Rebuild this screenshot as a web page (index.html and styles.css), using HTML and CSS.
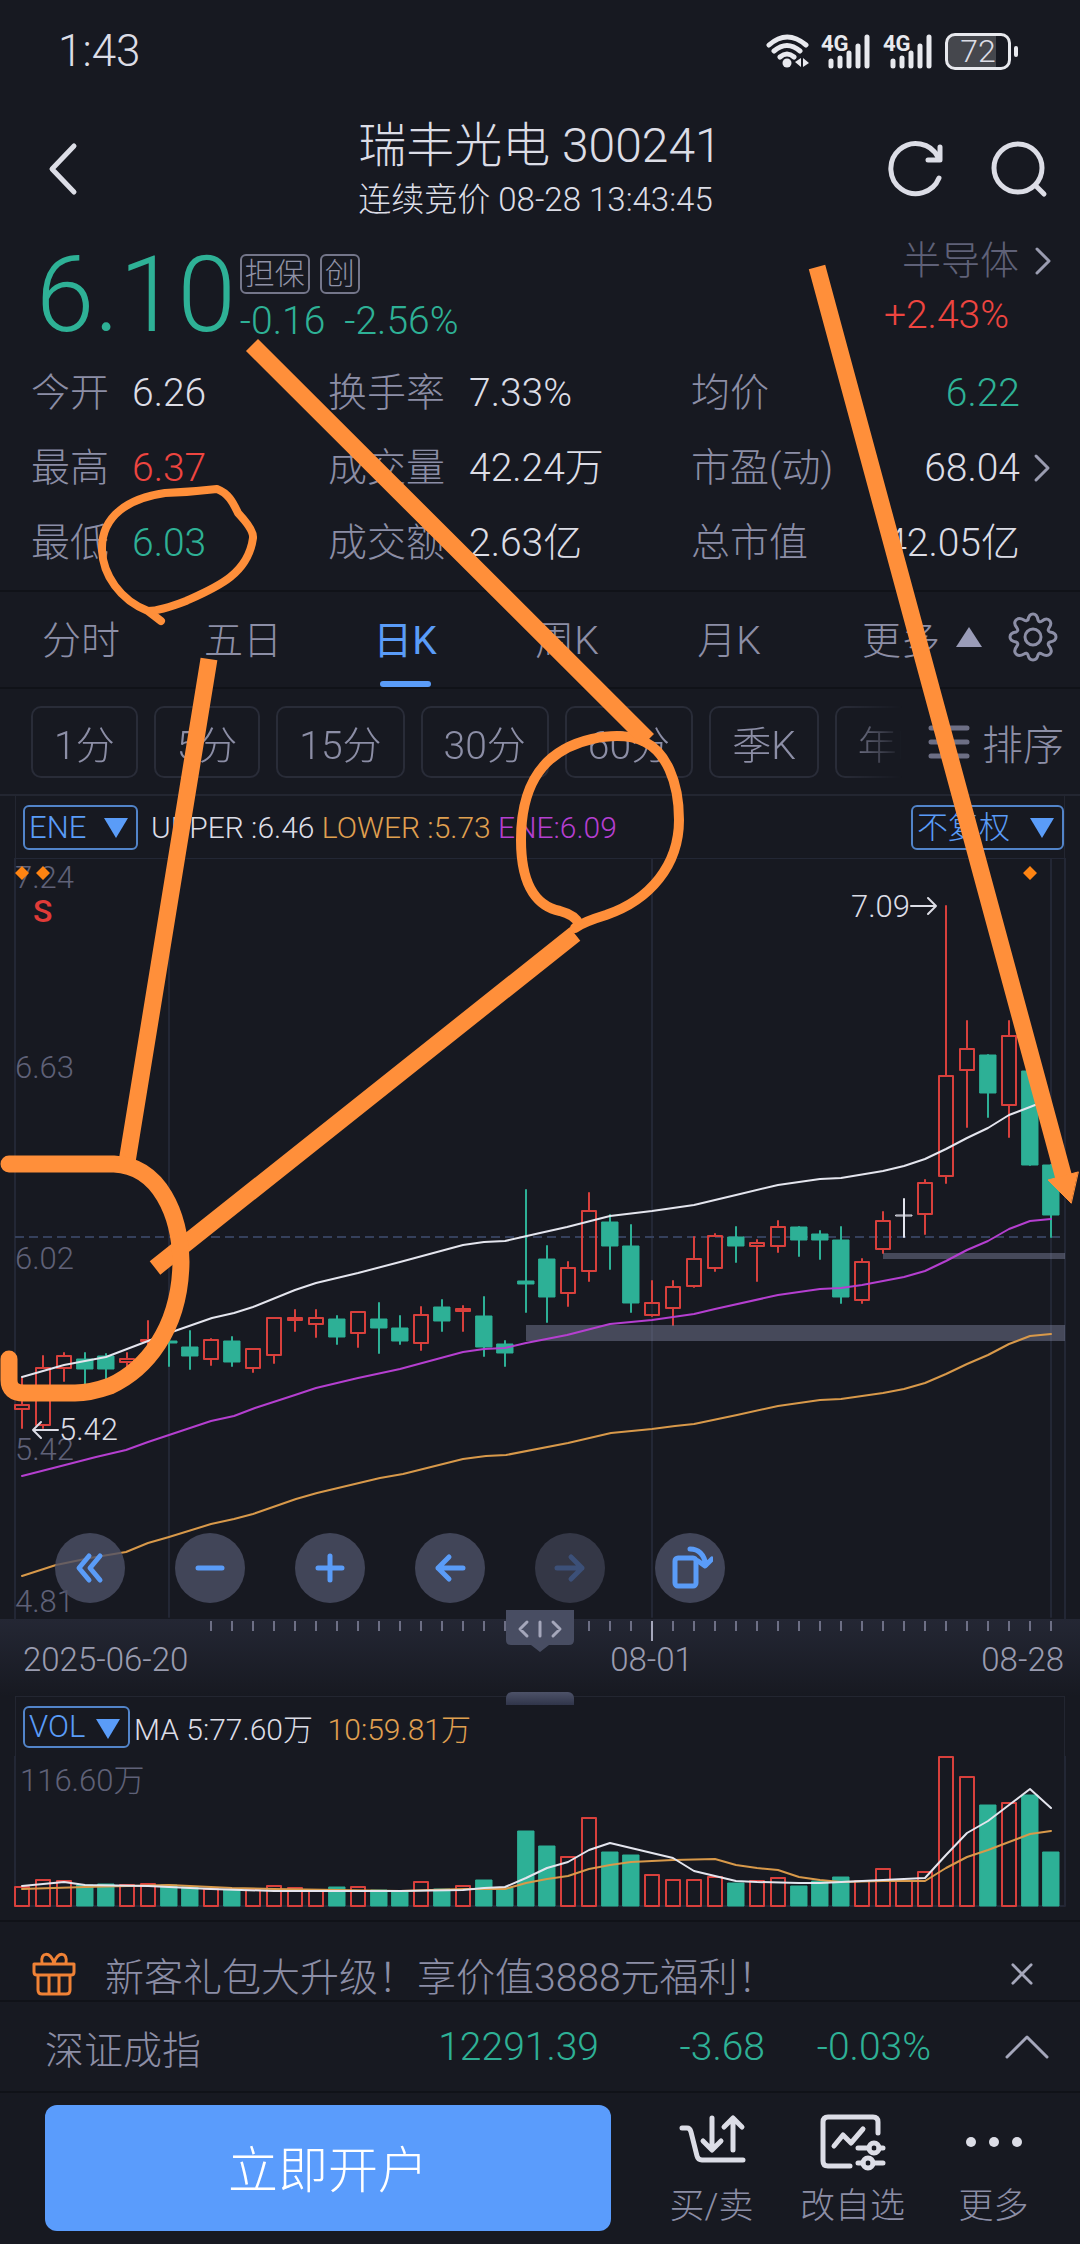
FILE: index.html
```html
<!DOCTYPE html>
<html lang="zh-CN">
<head>
    <meta charset="UTF-8">
    <meta name="viewport" content="width=device-width, initial-scale=1.0">
    <title>瑞丰光电 300241</title>
    <link rel="stylesheet" href="styles.css">
</head>
<body>
    <div class="page">
        <div class="status-bar">
            <span class="time">1:43</span>
            <div class="status-icons">
                <svg width="46" height="36" viewBox="0 0 46 36" fill="none" stroke="#e8e9ee" stroke-width="5" stroke-linecap="round">
                    <path d="M4 12Q22 -4 41 12M9 18Q22 7 35 18M15 24Q22 18 29 24"/>
                    <circle cx="22" cy="30" r="4.500" fill="#e8e9ee" stroke="none"/>
                    <path d="M36 25v9l-6-5zM38 25v9l6-4z" fill="#e8e9ee" stroke="none"/>
                </svg>
                <svg class="signal" width="52" height="36" viewBox="0 0 52 36">
                    <text x="0" y="18">4G</text>
                    <path d="M10 28v5M19 25v8M28 20v13M37 13v20M46 4v29"/>
                </svg>
                <svg class="signal" width="52" height="36" viewBox="0 0 52 36">
                    <text x="0" y="18">4G</text>
                    <path d="M10 28v5M19 25v8M28 20v13M37 13v20M46 4v29"/>
                </svg>
                <div class="battery">72</div>
            </div>
        </div>

        <div class="header">
            <button class="icon-button back" aria-label="返回">
                <svg width="30" height="54" viewBox="0 0 30 54"><path d="M26 4L4 27l22 23"/></svg>
            </button>
            <div class="title">
                <h1>瑞丰光电 300241</h1>
                <p>连续竞价 08-28 13:43:45</p>
            </div>
            <div class="header-actions">
                <button class="icon-button" aria-label="刷新">
                    <svg width="58" height="58" viewBox="0 0 58 58"><path d="M51 38A25 25 0 1 1 50 17M52 7v13h-12"/></svg>
                </button>
                <button class="icon-button" aria-label="搜索">
                    <svg width="58" height="58" viewBox="0 0 58 58"><circle cx="28" cy="28" r="24"/><path d="M46 46l8 8"/></svg>
                </button>
            </div>
        </div>

        <div class="quote">
            <div class="price">6.10</div>
            <div class="change">
                <div class="badges"><span>担保</span><span>创</span></div>
                <div class="diff">-0.16 &nbsp;-2.56%</div>
            </div>
            <div class="sector">
                <a href="#">半导体<svg width="18" height="30" viewBox="0 0 18 30"><path d="M3 3l12 12L3 27"/></svg></a>
                <span class="up">+2.43%</span>
            </div>
        </div>

        <div class="stats">
            <span class="label">今开</span><span>6.26</span>
            <span class="label">换手率</span><span>7.33%</span>
            <span class="label">均价</span><span class="right down">6.22</span>
            <span></span>
            <span class="label">最高</span><span class="up">6.37</span>
            <span class="label">成交量</span><span>42.24万</span>
            <span class="label">市盈(动)</span><span class="right">68.04</span>
            <svg width="18" height="30" viewBox="0 0 18 30"><path d="M3 3l12 12L3 27"/></svg>
            <span class="label">最低</span><span class="down">6.03</span>
            <span class="label">成交额</span><span>2.63亿</span>
            <span class="label">总市值</span><span class="right">42.05亿</span>
            <span></span>
        </div>

        <div class="tabs">
            <button>分时</button>
            <button>五日</button>
            <button class="active">日K</button>
            <button>周K</button>
            <button>月K</button>
            <button class="more">更多<svg width="26" height="20" viewBox="0 0 26 20"><path d="M13 0l13 20H0z"/></svg></button>
            <button class="gear" aria-label="设置">
                <svg width="50" height="50" viewBox="0 0 50 50">
                    <path d="M20 8Q21 2 25 2t5 6q1 3 4 1 5-4 8 0 2 3-1 7-2 3 1 4 6 1 6 5t-6 5q-3 1-1 4 4 5 1 8t-8 0q-3-2-4 1-1 5-5 5t-5-5q-1-3-4-1-5 3-8 0t1-8q2-3-1-4-6-1-6-5t6-5q3-1 1-4-4-5-1-8t8 0q3 2 4-1z"/>
                    <circle cx="25" cy="25" r="8"/>
                </svg>
            </button>
        </div>

        <div class="periods">
            <div class="period-list">
                <button>1分</button>
                <button>5分</button>
                <button>15分</button>
                <button>30分</button>
                <button>60分</button>
                <button>季K</button>
                <button>年K</button>
            </div>
            <button class="sort">
                <svg width="42" height="36" viewBox="0 0 42 36"><path d="M3 4h36M3 18h36M3 32h36"/></svg>排序
            </button>
        </div>

        <div class="indicator">
            <span class="picker"><select aria-label="主图指标"><option>ENE</option></select></span>
            <p><span>UPPER :6.46</span> <span class="lower">LOWER :5.73</span> <span class="ene">ENE:6.09</span></p>
            <span class="picker adjust"><select aria-label="复权"><option>不复权</option></select></span>
        </div>

        <div class="chart">
            <svg class="kline" viewBox="0 858 1080 761">
                <path class="grid" d="M15 858H1065M15 858V1619M1065 858V1619M169 858V1617M652 858V1617M1051 858V1617"/>
                <path class="last" d="M15 1237H1065"/>
                <g class="axis">
                    <text x="15" y="888">7.24</text>
                    <text x="15" y="1078">6.63</text>
                    <text x="15" y="1269">6.02</text>
                    <text x="15" y="1460">5.42</text>
                    <text x="15" y="1612">4.81</text>
                </g>
                <path class="mark" d="M22 866l7 7-7 7-7-7zM43 866l7 7-7 7-7-7zM1030 866l7 7-7 7-7-7z"/>
                <text class="sell" x="33" y="922">S</text>
                <g id="candles"></g>
                <rect class="zone" x="526" y="1325" width="539" height="16"/>
                <rect class="zone" x="883" y="1253" width="182" height="6"/>
                <polyline class="line upper" points="22,1377 64,1365 106,1357 127,1349 169,1333 212,1318 234,1313 253,1307 295,1290 316,1283 358,1273 400,1262 463,1245 484,1242 505,1241 540,1233 567,1227 610,1216 652,1211 673,1208 694,1205 715,1200 736,1195 778,1185 820,1179 841,1178 883,1171 904,1166 925,1159 946,1149 967,1138 988,1128 1009,1115 1030,1107 1040,1103"/>
                <polyline class="line mid" points="22,1476 65,1465 96,1457 126,1450 148,1442 169,1435 211,1421 234,1416 255,1408 295,1395 316,1388 358,1378 400,1369 463,1352 484,1349 505,1348 526,1343 567,1335 610,1324 652,1320 673,1317 694,1314 715,1309 778,1295 820,1289 841,1288 862,1285 904,1277 925,1271 946,1261 967,1250 988,1241 1009,1229 1030,1221 1051,1219"/>
                <polyline class="line low" points="22,1576 56,1565 90,1558 126,1552 148,1543 169,1537 211,1524 234,1519 253,1514 296,1499 317,1493 380,1478 403,1474 463,1459 486,1456 506,1455 568,1443 611,1433 652,1429 675,1426 694,1424 737,1415 778,1406 820,1400 841,1399 862,1396 883,1393 904,1389 925,1383 946,1374 967,1364 988,1355 1009,1344 1030,1336 1051,1334"/>
                <g class="peak">
                    <text x="851" y="917">7.09</text>
                    <path d="M911 906h25M928 898l8 8-8 8"/>
                    <text x="59" y="1440">5.42</text>
                    <path d="M33 1430h25M41 1422l-8 8 8 8"/>
                </g>
            </svg>
            <div class="tools">
                <button aria-label="最早"><svg viewBox="0 0 34 34"><path d="M16 5L6 17l10 12M27 5L17 17l10 12"/></svg></button>
                <button aria-label="缩小"><svg viewBox="0 0 34 34"><path d="M5 17h24"/></svg></button>
                <button aria-label="放大"><svg viewBox="0 0 34 34"><path d="M5 17h24M17 5v24"/></svg></button>
                <button aria-label="左移"><svg viewBox="0 0 34 34"><path d="M5 17h25M16 6L5 17l11 11"/></svg></button>
                <button aria-label="右移" disabled><svg viewBox="0 0 34 34"><path d="M4 17h25M18 6l11 11-11 11"/></svg></button>
                <button aria-label="横屏"><svg class="rotate" viewBox="0 0 46 46"><rect x="8" y="13" width="21" height="28" rx="3"/><path d="M23 4q13 0 16 16M31 16l7 5 7-7"/></svg></button>
            </div>
        </div>

        <div class="timeline">
            <svg class="ticks" viewBox="0 0 1080 22"><path id="ticks"/><path class="major" d="M652 2v20"/></svg>
            <div class="dates"><span>2025-06-20</span><span>08-01</span><span>08-28</span></div>
            <svg class="handle" width="70" height="42" viewBox="0 0 70 42">
                <path class="body" d="M1 0h68v30q0 5-5 5H44l-9 7-9-7H6q-5 0-5-5z"/>
                <path d="M22 12l-7 7 7 7M35 12v14M48 12l7 7-7 7"/>
            </svg>
        </div>

        <div class="volume">
            <div class="grip"></div>
            <div class="indicator">
                <span class="picker"><select aria-label="副图指标"><option>VOL</option></select></span>
                <p><span>MA 5:77.60万</span> &nbsp;<span class="lower">10:59.81万</span></p>
            </div>
            <svg viewBox="0 1756 1080 152">
                <path class="grid" d="M15 1756V1906H1065V1756"/>
                <text x="20" y="1791">116.60万</text>
                <g id="bars"></g>
                <polyline class="line low" points="22,1889 85,1887 169,1885 232,1888 274,1889 337,1890 400,1891 463,1889 505,1889 526,1883 547,1879 568,1876 589,1869 610,1865 631,1862 673,1860 715,1859 736,1865 757,1868 778,1870 799,1877 820,1880 841,1882 883,1881 925,1881 946,1868 967,1857 988,1850 1009,1842 1030,1834 1051,1831"/>
                <polyline class="line upper" points="22,1886 64,1882 85,1885 148,1886 211,1889 274,1891 337,1891 400,1891 463,1890 484,1888 505,1887 526,1878 547,1868 568,1862 589,1850 610,1843 631,1848 652,1853 673,1858 694,1871 736,1881 757,1882 799,1883 820,1883 862,1881 904,1879 925,1878 946,1855 967,1833 988,1821 1009,1805 1030,1789 1051,1808"/>
            </svg>
        </div>

        <div class="notice">
            <svg width="44" height="46" viewBox="0 0 44 46">
                <path d="M2 13h40v8q0 3-3 3H5q-3 0-3-3zM6 24v15q0 4 4 4h24q4 0 4-4V24M17 24v19M27 24v19M22 12C18 0 8 1 10 12M22 12C26 0 36 1 34 12"/>
            </svg>
            <p>新客礼包大升级！享价值3888元福利！</p>
            <button aria-label="关闭"><svg width="22" height="22" viewBox="0 0 24 24"><path d="M2 2l20 20M22 2L2 22"/></svg></button>
        </div>

        <div class="index-bar">
            <span class="name">深证成指</span>
            <span>12291.39</span>
            <span>-3.68</span>
            <span>-0.03%</span>
            <button aria-label="展开"><svg width="44" height="26" viewBox="0 0 44 26"><path d="M2 23L22 3l20 20"/></svg></button>
        </div>

        <div class="footer">
            <button class="open-account">立即开户</button>
            <button class="action">
                <svg width="66" height="56" viewBox="0 0 66 56">
                    <path d="M3 14h5q3 0 4 4l6 24q1 4 5 4h41M33 4v31M24 27l9 9 9-9M54 36V5M45 13l9-9 9 9"/>
                </svg>
                买/卖
            </button>
            <button class="action">
                <svg width="66" height="56" viewBox="0 0 66 56">
                    <path d="M30 52H8q-5 0-5-5V8q0-5 5-5h45q5 0 5 5v11M14 32l9-11 8 8 12-14M38 34h11M59 34h4M38 49h5M53 49h10"/>
                    <circle cx="54" cy="34" r="5"/><circle cx="48" cy="49" r="5"/>
                </svg>
                改自选
            </button>
            <button class="action">
                <svg width="66" height="56" viewBox="0 0 66 56">
                    <g class="dots"><circle cx="10" cy="28" r="5"/><circle cx="33" cy="28" r="5"/><circle cx="56" cy="28" r="5"/></g>
                </svg>
                更多
            </button>
        </div>

        <svg class="drawing" viewBox="0 0 1080 2244">
            <path class="thin" d="M148 611C120 600 103 575 102 550C101 515 130 498 165 493Q192 492 217 489C230 494 234 505 238 513Q254 530 253 538C248 575 215 588 186 601Q160 611 148 611L161 621"/>
            <path class="ring" d="M575 928Q583 922 606 915C650 900 679 865 679 820C679 780 665 752 645 742Q625 732 592 739C535 752 521 795 521 840C521 890 540 907 560 911Q575 915 579 924"/>
            <path class="bold" d="M252 345L648 740M575 934L155 1268M209 659L127 1162M817 267L1065 1182"/>
            <path class="round" d="M9 1164H114C160 1166 180 1215 181 1262C180 1330 145 1370 110 1386Q90 1393 75 1393H24Q9 1393 9 1380V1359"/>
            <path class="head" d="M1071 1203L1048 1180 1078 1172z"/>
        </svg>
    </div>

    <script src="script.js"></script>
</body>
</html>
```

FILE: script.js
```js
// Each row: direction, high, body top, body bottom, low, volume top (chart units)
const days = [
    ['r', 1378, 1405, 1410, 1428, 1887], ['r', 1356, 1368, 1426, 1428, 1880],
    ['r', 1353, 1356, 1369, 1381, 1881], ['g', 1353, 1359, 1369, 1384, 1885],
    ['g', 1354, 1356, 1369, 1380, 1884], ['r', 1353, 1359, 1363, 1367, 1885],
    ['r', 1321, 1340, 1342, 1345, 1884], ['g', 1336, 1341, 1343, 1366, 1885],
    ['g', 1331, 1347, 1356, 1369, 1887], ['r', 1339, 1340, 1360, 1365, 1889],
    ['g', 1337, 1341, 1362, 1366, 1890], ['r', 1349, 1349, 1369, 1372, 1890],
    ['r', 1318, 1318, 1356, 1363, 1886], ['r', 1310, 1318, 1321, 1331, 1888],
    ['r', 1310, 1318, 1325, 1337, 1891], ['g', 1316, 1319, 1337, 1344, 1887],
    ['r', 1312, 1312, 1334, 1347, 1887], ['g', 1303, 1319, 1328, 1353, 1890],
    ['g', 1316, 1328, 1341, 1344, 1891], ['r', 1307, 1315, 1344, 1350, 1882],
    ['g', 1300, 1307, 1321, 1331, 1889], ['r', 1306, 1309, 1312, 1331, 1886],
    ['g', 1297, 1316, 1347, 1356, 1880], ['g', 1341, 1344, 1353, 1366, 1888],
    ['g', 1190, 1281, 1284, 1312, 1831], ['g', 1246, 1259, 1297, 1322, 1846],
    ['r', 1262, 1268, 1294, 1306, 1857], ['r', 1193, 1211, 1272, 1281, 1818],
    ['g', 1215, 1222, 1246, 1269, 1852], ['g', 1225, 1246, 1303, 1312, 1855],
    ['r', 1281, 1303, 1316, 1316, 1875], ['r', 1281, 1287, 1309, 1325, 1880],
    ['r', 1237, 1259, 1287, 1287, 1880], ['r', 1234, 1236, 1269, 1271, 1877],
    ['g', 1227, 1237, 1246, 1262, 1883], ['r', 1240, 1243, 1247, 1281, 1881],
    ['r', 1221, 1227, 1247, 1252, 1878], ['g', 1227, 1227, 1240, 1256, 1886],
    ['g', 1231, 1234, 1240, 1259, 1881], ['g', 1227, 1240, 1297, 1303, 1877],
    ['r', 1259, 1262, 1301, 1303, 1881], ['r', 1212, 1221, 1250, 1253, 1869],
    ['w', 1199, 1215, 1215, 1237, 1881], ['r', 1180, 1183, 1215, 1234, 1872],
    ['r', 906, 1076, 1177, 1183, 1757], ['r', 1021, 1049, 1071, 1127, 1777],
    ['g', 1055, 1055, 1093, 1117, 1805], ['r', 1021, 1036, 1106, 1137, 1803],
    ['g', 1071, 1071, 1165, 1165, 1795], ['g', 1165, 1165, 1215, 1237, 1852]
];

let candles = '';
let bars = '';
days.forEach(function([dir, high, top, bottom, low, vol], i) {
    const x = 22 + i * 21;
    const inset = dir === 'r' ? 7 : 8;
    const height = Math.max(bottom - top - (dir === 'r' ? 1 : 0), 1);
    candles += `<g class="${dir}"><path d="M${x} ${high}V${top}M${x} ${bottom}V${low}"/>` +
        `<rect x="${x - inset}" y="${top}" width="${inset * 2}" height="${height}"/></g>`;
    bars += `<g class="${dir === 'w' ? 'r' : dir}"><rect x="${x - inset}" y="${vol}" width="${inset * 2}" height="${1906 - vol}"/></g>`;
});
document.getElementById('candles').innerHTML = candles;
document.getElementById('bars').innerHTML = bars;

// Day ticks under the chart
let ticks = '';
for (let x = 211; x <= 1051; x += 21) {
    ticks += `M${x} 2v10`;
}
document.getElementById('ticks').setAttribute('d', ticks);
```

FILE: styles.css
```css
* {
    box-sizing: border-box;
}
body {
    margin: 0;
    background-color: #171921;
    color: #dcdde6;
    font-family: Roboto, "Noto Sans CJK SC", sans-serif;
    font-weight: 300;
    font-size: 39px;
}
h1, p {
    margin: 0;
    font-weight: 300;
}
button, select {
    font: inherit;
    color: inherit;
    background: none;
    border: none;
    padding: 0;
    margin: 0;
}
svg {
    display: block;
    fill: none;
    stroke-linecap: round;
    stroke-linejoin: round;
}
a {
    color: inherit;
    text-decoration: none;
}
.page {
    position: relative;
    overflow: hidden;
}
.up {
    color: #ee4540;
}
.down {
    color: #2eb196;
}

/* Status bar and title */
.status-bar {
    display: flex;
    justify-content: space-between;
    align-items: center;
    height: 102px;
    padding: 0 69px 0 58px;
}
.time {
    font-size: 44px;
}
.status-icons {
    display: flex;
    align-items: center;
    gap: 10px;
}
.signal {
    stroke: #e8e9ee;
    stroke-width: 5;
}
.signal text {
    fill: #e8e9ee;
    stroke: none;
    font-size: 22px;
    font-weight: 700;
}
.battery {
    position: relative;
    width: 66px;
    height: 37px;
    border: 3px solid #e8e9ee;
    border-radius: 10px;
    background: linear-gradient(90deg, #45474d 80%, transparent 80%);
    font-size: 32px;
    line-height: 31px;
    text-align: center;
}
.battery::after {
    content: "";
    position: absolute;
    right: -10px;
    top: 10px;
    width: 4px;
    height: 11px;
    border-radius: 2px;
    background-color: #e8e9ee;
}
.header {
    display: grid;
    grid-template-columns: 1fr auto 1fr;
    align-items: center;
    height: 134px;
    padding: 0 32px;
}
.back {
    padding-left: 16px;
    justify-self: start;
}
.title h1 {
    font-size: 48px;
    line-height: 62px;
}
.title p {
    font-size: 33px;
    line-height: 46px;
}
.header-actions {
    display: flex;
    justify-content: flex-end;
    gap: 44px;
}
.icon-button svg {
    stroke: #dcdde6;
    stroke-width: 5;
}

/* Price block */
.quote {
    display: flex;
    height: 118px;
    padding: 0 28px 0 36px;
}
.price {
    color: #2eb196;
    font-size: 105px;
    line-height: 120px;
}
.change {
    flex: 1;
    padding: 18px 0 0 4px;
}
.badges {
    display: flex;
    gap: 10px;
    color: #9092a6;
}
.badges span {
    border: 2px solid #74768a;
    border-radius: 6px;
    padding: 0 3px;
    font-size: 30px;
    line-height: 36px;
}
.diff {
    color: #2eb196;
    font-size: 39px;
    line-height: 54px;
}
.sector {
    display: flex;
    flex-direction: column;
    align-items: flex-end;
}
.sector a {
    display: flex;
    align-items: center;
    gap: 15px;
    color: #5f6178;
    line-height: 50px;
}
.sector svg, .stats svg {
    stroke: #9a9cb0;
    stroke-width: 3;
}
.sector .up {
    margin-right: 43px;
    line-height: 58px;
}
.stats {
    display: grid;
    grid-template-columns: 101px 196px 141px 222px 1fr auto 44px;
    align-items: center;
    justify-items: start;
    row-gap: 3px;
    padding: 3px 16px 11px 31px;
    line-height: 72px;
    border-bottom: 2px solid #101218;
}
.stats .label {
    color: #8c8ea6;
}
.stats .right {
    justify-self: end;
}
.stats svg {
    justify-self: center;
}

/* Tabs */
.tabs {
    display: flex;
    height: 97px;
    color: #8c8ea6;
    border-bottom: 2px solid #101218;
}
.tabs button {
    position: relative;
    width: 15%;
    padding-bottom: 6px;
}
.tabs .active {
    color: #5a9cf8;
    font-weight: 400;
}
.tabs .active::after {
    content: "";
    position: absolute;
    left: 56px;
    bottom: 0;
    width: 51px;
    height: 6px;
    border-radius: 3px;
    background-color: #5a9cf8;
}
.tabs .more {
    display: flex;
    flex: 1;
    align-items: center;
    justify-content: flex-end;
    gap: 16px;
    padding-right: 6px;
}
.more svg {
    fill: #9a9cb8;
}
.tabs .gear {
    width: 92px;
    padding-left: 20px;
}
.gear svg {
    stroke: #8c8ea6;
    stroke-width: 3;
}
.periods {
    display: flex;
    align-items: center;
    height: 107px;
    padding: 0 16px 0 31px;
    color: #8c8ea6;
    border-bottom: 2px solid #232631;
}
.period-list {
    display: flex;
    flex: 1;
    gap: 16px;
    overflow: hidden;
    -webkit-mask-image: linear-gradient(90deg, #000 93%, transparent);
    mask-image: linear-gradient(90deg, #000 93%, transparent);
}
.period-list button {
    flex: none;
    height: 72px;
    padding: 0 21px;
    border: 2px solid #292c38;
    border-radius: 10px;
}
.sort {
    display: flex;
    align-items: center;
    gap: 12px;
    margin-left: 26px;
    font-size: 41px;
}
.sort svg {
    stroke: #6d6f85;
    stroke-width: 5;
}

/* Indicator rows */
.indicator {
    display: flex;
    align-items: center;
    height: 62px;
    margin: 0 15px;
    padding-left: 7px;
    border: 1px solid #232631;
    border-width: 0 1px;
}
.indicator p {
    flex: 1;
    padding-left: 13px;
    font-size: 30px;
    white-space: nowrap;
}
.picker {
    position: relative;
    color: #5a9cf8;
    font-size: 31px;
}
.picker select {
    appearance: none;
    width: 115px;
    height: 45px;
    padding-left: 4px;
    border: 2px solid #5284c9;
    border-radius: 6px;
}
.picker.adjust select {
    width: 153px;
}
.picker::after {
    content: "";
    position: absolute;
    right: 10px;
    top: 13px;
    border: 12px solid transparent;
    border-top: 20px solid #5a9cf8;
    border-bottom: 0;
    pointer-events: none;
}
.lower {
    color: #e0a050;
}
.ene {
    color: #b53fd0;
}

/* K-line chart */
.chart {
    position: relative;
}
.chart svg text, .volume svg text {
    font-size: 31px;
    fill: #5f6178;
}
.grid {
    stroke: #232735;
    stroke-width: 2;
}
.last {
    stroke: #35405c;
    stroke-width: 2;
    stroke-dasharray: 9 5;
    stroke-linecap: butt;
}
.mark {
    fill: #ff8412;
}
.chart svg .sell {
    fill: #e03b38;
    font-size: 32px;
    font-weight: 500;
}
.zone {
    fill: #8085a0;
    fill-opacity: 0.450;
}
.line {
    stroke-width: 2;
}
.upper {
    stroke: #e4e5ee;
}
.mid {
    stroke: #b53fd0;
}
.low {
    stroke: #d8994a;
}
.r {
    stroke: #d8403c;
    stroke-width: 2;
}
.g {
    stroke: #2db096;
    stroke-width: 2;
}
.g rect {
    fill: #2db096;
    stroke-width: 1;
}
.w {
    stroke: #e4e5ee;
    stroke-width: 2;
}
.w rect {
    stroke-width: 1;
}
.peak {
    stroke: #dcdde6;
    stroke-width: 2;
}
.chart svg .peak text {
    fill: #dcdde6;
    stroke: none;
}
.tools {
    position: absolute;
    left: 55px;
    bottom: 16px;
    display: flex;
    gap: 50px;
}
.tools button {
    display: flex;
    align-items: center;
    justify-content: center;
    width: 70px;
    height: 70px;
    border-radius: 50%;
    background-color: rgba(76, 80, 102, 0.800);
}
.tools svg {
    width: 34px;
    stroke: #5a9cf8;
    stroke-width: 5;
}
.tools svg.rotate {
    width: 46px;
}
.tools button:disabled {
    background-color: rgba(76, 80, 102, 0.550);
}
.tools button:disabled svg {
    stroke: #3c5078;
}
.timeline {
    position: relative;
    height: 77px;
    background: linear-gradient(#242734, #171921);
}
.ticks {
    width: 100%;
    stroke: #6d6f85;
    stroke-width: 2;
    stroke-linecap: butt;
}
.ticks .major {
    stroke: #a5a7bb;
}
.dates {
    display: grid;
    grid-template-columns: 1fr auto 1fr;
    padding: 0 16px 0 23px;
    color: #9a9cb0;
    font-size: 33px;
    line-height: 38px;
}
.dates span:nth-child(2) {
    padding-left: 216px;
}
.dates span:last-child {
    text-align: right;
}
.handle {
    position: absolute;
    left: 505px;
    top: -9px;
    stroke: #a5a7bb;
    stroke-width: 3;
}
.handle .body {
    fill: #484d62;
    stroke: none;
}

/* Volume chart */
.volume {
    position: relative;
    padding-bottom: 12px;
    border-bottom: 2px solid #101218;
}
.volume .indicator {
    height: 60px;
    border-top-width: 1px;
}
.volume .indicator p {
    padding-left: 4px;
}
.volume .picker select {
    width: 107px;
    height: 42px;
}
.grip {
    position: absolute;
    left: 506px;
    top: -4px;
    width: 68px;
    height: 13px;
    border-radius: 6px 6px 0 0;
    background: linear-gradient(#4d5268, #30354a);
}

/* Notice, index and footer */
.notice {
    display: flex;
    align-items: center;
    height: 80px;
    padding: 26px 47px 0 32px;
    color: #8c8ea6;
    border-bottom: 2px solid #101218;
}
.notice svg {
    stroke: #f08236;
    stroke-width: 3;
}
.notice p {
    flex: 1;
    padding-left: 29px;
}
.notice button svg, .index-bar svg {
    stroke: #a5a7bb;
}
.index-bar {
    display: grid;
    grid-template-columns: 1fr auto 166px 166px 118px;
    align-items: center;
    height: 91px;
    padding: 0 31px 0 45px;
    color: #2eb196;
    text-align: right;
    border-bottom: 2px solid #101218;
}
.index-bar .name {
    color: #8c8ea6;
    text-align: left;
}
.index-bar svg {
    margin-left: auto;
    stroke-width: 3;
}
.footer {
    display: flex;
    align-items: center;
    height: 150px;
    padding: 0 16px 0 45px;
}
.open-account {
    flex: 1;
    height: 126px;
    margin-right: 30px;
    padding-bottom: 4px;
    border-radius: 12px;
    background-color: #5a9cfc;
    color: #fff;
    font-size: 50px;
}
.action {
    display: flex;
    flex-direction: column;
    align-items: center;
    gap: 14px;
    width: 141px;
    padding-top: 8px;
    color: #8c8ea6;
    font-size: 35px;
    line-height: 46px;
}
.action svg {
    stroke: #dcdde6;
    stroke-width: 5;
    overflow: visible;
}
.action .dots {
    fill: #dcdde6;
    stroke: none;
}

/* Hand drawn notes over the page */
.drawing {
    position: absolute;
    left: 0;
    top: 0;
    width: 100%;
    stroke: #ff8f3a;
    pointer-events: none;
}
.thin {
    stroke-width: 8;
}
.ring {
    stroke-width: 10;
}
.bold {
    stroke-width: 17;
    stroke-linecap: butt;
}
.round {
    stroke-width: 17;
}
.head {
    fill: #ff8f3a;
}
```
